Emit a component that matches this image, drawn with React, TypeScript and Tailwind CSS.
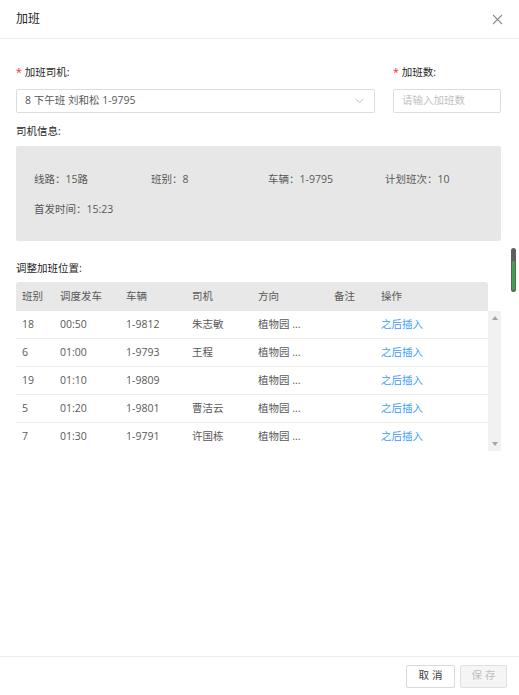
import * as React from 'react';

const rows = [
  { no: '18', time: '00:50', car: '1-9812', driver: '朱志敏', dir: '植物园 ...' },
  { no: '6', time: '01:00', car: '1-9793', driver: '王程', dir: '植物园 ...' },
  { no: '19', time: '01:10', car: '1-9809', driver: '', dir: '植物园 ...' },
  { no: '5', time: '01:20', car: '1-9801', driver: '曹洁云', dir: '植物园 ...' },
  { no: '7', time: '01:30', car: '1-9791', driver: '许国栋', dir: '植物园 ...' },
];

const cols = 'grid grid-cols-[38px_66px_66px_66px_76px_47px_1fr]';

const App: React.FC = () => {
  return (
    <div
      className="relative flex flex-col h-[695px] w-[519px] bg-white text-[10.5px] text-[#595959]"
      style={{ fontFamily: '"Open Sans", "Noto Sans CJK SC", sans-serif' }}
    >
      {/* header */}
      <div className="flex items-center justify-between h-[39px] px-4 border-b border-[#ececec] shrink-0">
        <span className="text-[12px] text-[#262626]">加班</span>
        <svg width="11" height="11" viewBox="0 0 11 11">
          <path d="M1 1 L10 10 M10 1 L1 10" stroke="#8c8c8c" strokeWidth="1.1" />
        </svg>
      </div>

      {/* body */}
      <div className="flex-1 px-4 pt-[26px]">
        <div className="flex gap-[18px]">
          <div className="w-[359px]">
            <div className="h-[14px] leading-[14px] text-[#262626] mb-[10px]">
              <span className="text-[#f5222d] mr-[3px]">*</span>加班司机:
            </div>
            <div className="flex items-center justify-between h-[24px] border border-[#dcdcdc] rounded-[2px] pl-[8px] pr-[10px]">
              <span className="text-[#595959]">8 下午班 刘和松 1-9795</span>
              <svg width="9" height="6" viewBox="0 0 9 6">
                <path d="M0.5 0.8 L4.5 4.8 L8.5 0.8" stroke="#bfbfbf" strokeWidth="1" fill="none" />
              </svg>
            </div>
          </div>
          <div className="w-[108px]">
            <div className="h-[14px] leading-[14px] text-[#262626] mb-[10px]">
              <span className="text-[#f5222d] mr-[3px]">*</span>加班数:
            </div>
            <div className="flex items-center h-[24px] border border-[#dcdcdc] rounded-[2px] px-[8px]">
              <span className="text-[#bfbfbf]">请输入加班数</span>
            </div>
          </div>
        </div>

        <div className="h-[14px] leading-[14px] text-[#262626] mt-[11px] mb-[8px]">司机信息:</div>
        <div className="w-[485px] h-[95px] bg-[#e7e7e7] rounded-[2px] pl-[18px] pt-[26px]">
          <div className="grid grid-cols-[117px_117px_117px_117px] h-[14px] leading-[14px]">
            <span>线路：15路</span>
            <span>班别：8</span>
            <span>车辆：1-9795</span>
            <span>计划班次：10</span>
          </div>
          <div className="h-[14px] leading-[14px] mt-[16px]">首发时间：15:23</div>
        </div>

        <div className="h-[14px] leading-[14px] text-[#262626] mt-[20px] mb-[7px]">调整加班位置:</div>
        <div className="w-[485px]">
          <div className={`${cols} w-[472px] h-[29px] items-center bg-[#e8e8e8] rounded-t-[3px] text-[#595959]`}>
            {['班别', '调度发车', '车辆', '司机', '方向', '备注', '操作'].map((h) => (
              <span key={h} className="px-[6px]">{h}</span>
            ))}
          </div>
          <div className="flex">
            <div className="w-[472px]">
              {rows.map((r, i) => (
                <div
                  key={i}
                  className={`${cols} h-[28px] items-center ${i < rows.length - 1 ? 'border-b border-[#ececec]' : ''}`}
                >
                  <span className="px-[6px]">{r.no}</span>
                  <span className="px-[6px]">{r.time}</span>
                  <span className="px-[6px]">{r.car}</span>
                  <span className="px-[6px]">{r.driver}</span>
                  <span className="px-[6px]">{r.dir}</span>
                  <span className="px-[6px]"></span>
                  <span className="px-[6px] text-[#3d9bff]">之后插入</span>
                </div>
              ))}
            </div>
            <div className="w-[13px] h-[140px] bg-[#f1f1f1] flex flex-col items-center justify-between py-[5px]">
              <svg width="6" height="4" viewBox="0 0 6 4">
                <path d="M3 0 L6 4 L0 4 Z" fill="#a3a3a3" />
              </svg>
              <svg width="6" height="4" viewBox="0 0 6 4">
                <path d="M0 0 L6 0 L3 4 Z" fill="#a3a3a3" />
              </svg>
            </div>
          </div>
        </div>
      </div>

      {/* footer */}
      <div className="flex items-center justify-end gap-[5px] h-[39px] pr-[12px] border-t border-[#ececec] shrink-0">
        <button className="h-[23px] w-[49px] border border-[#d9d9d9] rounded-[2px] bg-white text-[#404040] tracking-[3px] pl-[3px]">
          取消
        </button>
        <button className="h-[23px] w-[47px] border border-[#e0e0e0] rounded-[2px] bg-[#f5f5f5] text-[#bfbfbf] tracking-[3px] pl-[3px]">
          保存
        </button>
      </div>

      {/* page scroll indicator */}
      <div className="absolute left-[511px] top-[248px] w-[5px] h-[44px] rounded-full bg-[#5f5f5f] overflow-hidden flex flex-col justify-end">
        <div className="h-[29px] bg-[#3fa34d] mx-[1px] mb-[2px] rounded-[1px]" />
      </div>
    </div>
  );
};

export default App;
